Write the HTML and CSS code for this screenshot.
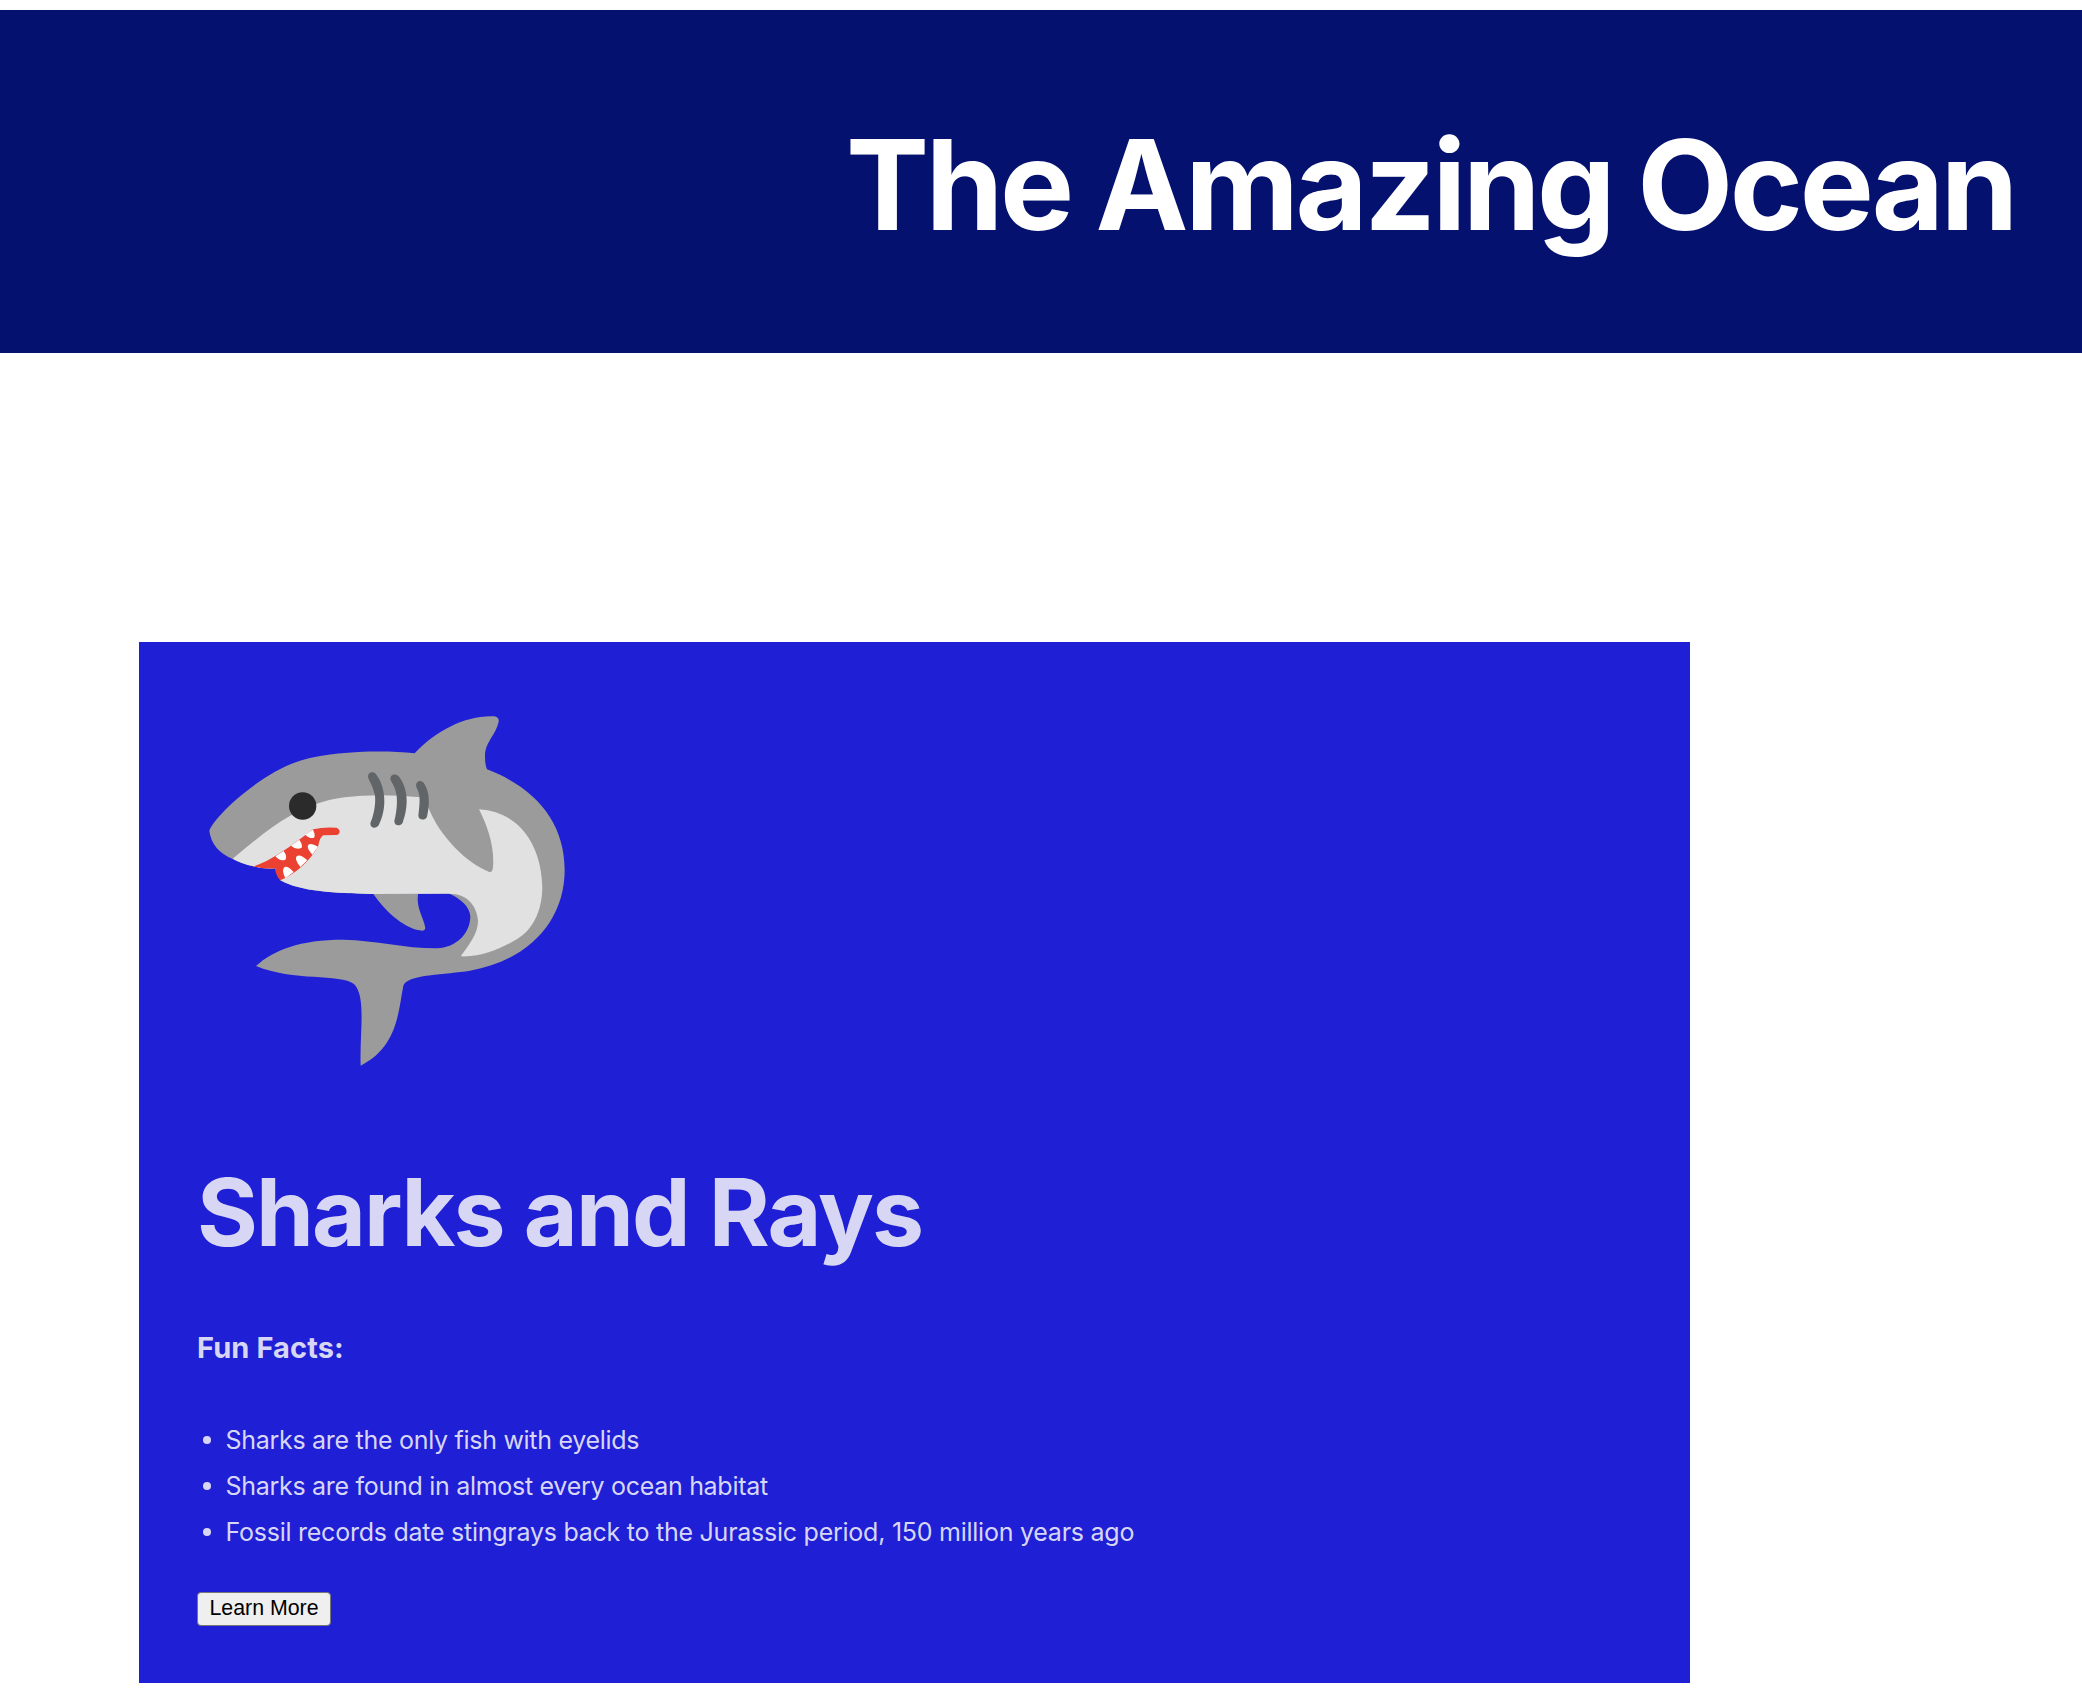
FILE: index.html
```html
<!DOCTYPE html>
<html lang="en">
<head>
<meta charset="utf-8">
<title>The Amazing Ocean</title>
<link rel="stylesheet" href="styles.css">
</head>
<body>
<header class="banner"><h1 class="title">The Amazing Ocean</h1></header>
<main class="content">
<section class="card">
<svg class="shark" viewBox="21 0 1140 1140" role="img" aria-label="Shark">
<path fill="#9b9b9b" d="M58 392C75 345 220 213 335 181C430 153 580 150 674 160C740 90 830 45 912 49Q928 52 926 65C915 110 885 125 885 170Q885 195 891 208C1040 265 1124 370 1124 510C1124 660 1020 780 840 812C770 824 650 822 640 857C625 930 625 1040 512 1097C508 1000 530 890 492 852C450 820 310 845 198 798C250 750 330 719 460 719C560 721 640 745 740 745C800 742 840 700 841 650C840 620 810 595 775 580L540 582C440 580 330 575 271 541L255 505Q220 508 190 499Q150 490 128 477Q65 450 58 392Z"/>
<path fill="#e1e1e1" d="M128 476C185 430 240 380 305 345L378 312C450 285 570 280 690 292L716 325C750 410 830 490 898 516Q908 518 909 500C914 440 893 380 867 328C990 335 1056 440 1057 565C1055 640 1025 690 985 715C940 742 880 772 812 769C840 730 865 700 864 660C860 620 835 580 775 581L540 582C440 580 330 575 271 541L255 505Q220 508 190 499Q155 491 128 476Z"/>
<path fill="#9b9b9b" d="M550 582C590 640 650 690 698 692Q706 691 706 684C700 650 678 625 684 582Z"/>
<circle cx="338" cy="318" r="41" fill="#2b2b2b"/>
<g fill="#616568">
<path d="M534 230C534 216 550 213 558 223C590 265 590 330 566 376C558 388 540 385 541 370C557 335 558 290 553 280C548 255 535 240 534 230Z"/>
<path d="M601 236C602 222 617 220 626 229C658 270 654 325 638 368C630 381 612 377 613 363C623 325 622 290 618 278C614 255 602 245 601 236Z"/>
<path d="M678 255C680 242 692 240 701 248C722 278 718 320 711 350C706 362 687 362 685 348C689 315 690 295 687 283C684 268 678 262 678 255Z"/>
</g>
<path fill="#eb4132" d="M190 499C240 485 300 440 370 388Q400 380 440 383Q450 388 449 395Q448 405 436 405L400 406Q390 410 384 440C360 480 320 520 271 541Q258 530 255 505Q220 508 190 499Z"/>
<path fill="#fff" d="M256 469L281 453Q293 470 286 479Q272 486 256 469ZM303 437L328 419Q340 438 334 444Q319 451 303 437ZM346 404L369 389Q378 408 371 414Q357 416 346 404ZM286 535Q273 510 284 501Q294 498 311 516ZM331 501Q312 478 320 469Q330 460 352 481ZM367 464Q348 442 355 434Q364 428 384 440Z"/>
</svg>
<h2 class="heading">Sharks and Rays</h2>
<h3 class="subheading">Fun Facts:</h3>
<ul class="facts">
<li>Sharks are the only fish with eyelids</li>
<li>Sharks are found in almost every ocean habitat</li>
<li>Fossil records date stingrays back to the Jurassic period, 150 million years ago</li>
</ul>
<button class="more" type="button">Learn More</button>
</section>
</main>
</body>
</html>
```
FILE: styles.css
```css
body { margin: 0; padding-top: 10px; background: #fff; font-family: Inter, sans-serif; }
.banner { height: 337px; padding: 6px 67px 0 0; background: #05116e; color: #fff; text-align: right; }
.title { margin: 0; font-size: 124.5px; line-height: 337px; font-weight: 700; letter-spacing: -3.3px; word-spacing: -1.5px; }
.content { padding: 289px 0 0 139px; }
.card { box-sizing: border-box; width: 1551px; height: 1041px; padding: 58px; background: #1f1fd6; color: #d7d7f5; }
.shark { display: block; width: 380px; height: 380px; }
.heading { margin: 76px 0 0; font-size: 93px; line-height: 112px; letter-spacing: -1.9px; }
.subheading { margin: 62px 0 0; font-size: 29px; line-height: 36px; letter-spacing: 0.1px; }
.facts { margin: 51px 0 37px; padding: 0; list-style: none; font-size: 25px; line-height: 46px; letter-spacing: -0.29px; }
.facts li { display: flex; align-items: center; }
.facts li:last-child { letter-spacing: -0.25px; }
.facts li::before { content: ""; width: 8px; height: 8px; margin: 0 14.5px 0 6px; border-radius: 50%; background: currentColor; }
.more { display: block; box-sizing: border-box; width: 134px; height: 34px; padding: 0 0 2px; border: 1px solid #767676; border-radius: 4px; background: #efefef; color: #000; font: 21.33px/30px "Liberation Sans", Arial, sans-serif; }
```
